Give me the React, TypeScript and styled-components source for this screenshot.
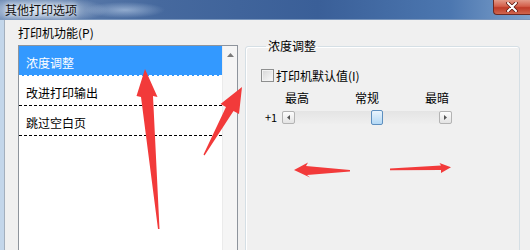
import styled, { createGlobalStyle } from "styled-components"

const GlobalStyle = createGlobalStyle`
	* { box-sizing: border-box; }
	html, body {
		margin: 0;
		padding: 0;
		background: #f0f0f0;
		overflow: hidden;
	}
	body {
		font-family: "Noto Sans CJK SC", "Liberation Sans", sans-serif;
		font-size: 12px;
		color: #000;
	}
`

const Window = styled.div`
	position: relative;
	width: 530px;
	height: 250px;
	display: flex;
	flex-direction: column;
	overflow: hidden;
`

const TitleBar = styled.header`
	height: 20px;
	flex-shrink: 0;
	display: flex;
	align-items: flex-start;
	justify-content: space-between;
	border-bottom: 1px solid #7b97bd;
	background:
		radial-gradient(ellipse 70px 14px at 38px 10px, rgba(220, 232, 245, 0.85), rgba(220, 232, 245, 0) 100%),
		radial-gradient(ellipse 40px 8px at 125px 10px, rgba(190, 210, 235, 0.6), rgba(190, 210, 235, 0) 100%),
		linear-gradient(to right, #6886b2 0%, #46699e 30%, #3a5f98 60%, #4c77b0 85%, #7fa2cc 100%);
`

const Title = styled.span`
	padding-left: 5px;
	line-height: 19px;
	font-size: 12px;
	color: #111;
	text-shadow: 0 0 4px #fff, 0 0 8px rgba(255, 255, 255, 0.9);
`

const CloseButton = styled.div`
	flex: 0 0 37px;
	height: 15px;
	display: flex;
	justify-content: center;
	align-items: center;
	border-left: 1px solid #6e2a22;
	border-bottom: 1px solid #6e2a22;
	border-radius: 0 0 0 4px;
	background: linear-gradient(to bottom, #e39a88 0%, #d35f4a 45%, #bf3b27 55%, #d0664f 100%);
`

const Frame = styled.div`
	flex: 1;
	display: flex;
	min-height: 0;
	border-left: 4px solid #c3d6ea;
`

const Body = styled.div`
	flex: 1;
	display: flex;
	align-items: flex-start;
	background: #f0f0f0;
	border-left: 1px solid #a3afbd;
`

const LeftPane = styled.div`
	display: flex;
	flex-direction: column;
	gap: 5px;
	padding: 6px 0 0 13px;
`

const SectionLabel = styled.div`
	line-height: 14px;
`

const ListBox = styled.div`
	width: 220px;
	height: 230px;
	display: flex;
	border: 1px solid #8e949c;
	background: #fff;
`

const Items = styled.div`
	flex: 1;
	display: flex;
	flex-direction: column;
`

const Item = styled.div<{ $selected?: boolean }>`
	height: 30px;
	display: flex;
	align-items: center;
	padding: 3px 0 0 7px;
	border-bottom: 1px dashed ${(p) => (p.$selected ? "#ffffff" : "#000000")};
	background: ${(p) => (p.$selected ? "#3399ff" : "transparent")};
	color: ${(p) => (p.$selected ? "#ffffff" : "#000000")};
`

const ScrollTrack = styled.div`
	width: 15px;
	display: flex;
	flex-direction: column;
	background: #f5f5f5;
	border-left: 1px solid #ebebeb;
`

const ScrollArrow = styled.div`
	height: 17px;
	display: flex;
	justify-content: center;
	align-items: center;
`

const GroupBox = styled.fieldset`
	margin: 20px 0 0 7px;
	width: 275px;
	height: 240px;
	min-width: 0;
	padding: 16px 0 0 15px;
	border: 1px solid #d5dfe5;
	border-radius: 3px;
	box-shadow: inset 1px 1px 0 #ffffff;
`

const Legend = styled.legend`
	margin-left: 5px;
	padding: 0 2px;
	line-height: 12px;
	font-size: 12px;
`

const CheckRow = styled.label`
	display: flex;
	align-items: center;
	gap: 2px;
	height: 14px;
`

const CheckBox = styled.span`
	width: 13px;
	height: 13px;
	border: 1px solid #8e8f8f;
	background: linear-gradient(135deg, #d6d6d6, #fbfbfb);
	box-shadow: inset 0 0 0 1px #f2f2f2;
`

const Scale = styled.div`
	margin-top: 9px;
	display: flex;
	flex-direction: column;
	gap: 5px;
`

const ScaleLabels = styled.div`
	width: 164px;
	margin-left: 24px;
	display: flex;
	justify-content: space-between;
	line-height: 14px;
`

const SliderRow = styled.div`
	display: flex;
	align-items: center;
	height: 15px;
`

const ValueText = styled.span`
	width: 21px;
	padding-left: 4px;
	font-size: 11px;
	line-height: 15px;
`

const Track = styled.div`
	width: 170px;
	height: 13px;
	display: flex;
	align-items: center;
	background: linear-gradient(to bottom, #e4e4e4, #efefef);
`

const StepButton = styled.div`
	width: 13px;
	height: 13px;
	display: flex;
	justify-content: center;
	align-items: center;
	border: 1px solid #b3b3b3;
	border-radius: 2px;
	background: linear-gradient(to bottom, #fdfdfd, #e3e3e3);
`

const Rail = styled.div`
	flex: 1;
	height: 100%;
	display: flex;
	align-items: center;
`

const Thumb = styled.div<{ $offset: number }>`
	width: 12px;
	height: 15px;
	margin-left: ${(p) => p.$offset}px;
	border: 1px solid #5d8fbf;
	border-radius: 2px;
	background: linear-gradient(to bottom, #e9f4fd, #b3d8f5);
`

const Annotations = styled.svg`
	position: absolute;
	top: 0;
	left: 0;
	pointer-events: none;
`

const arrows = [
	"145,69 157.5,97 153,96 159.5,229 158,229 141,97 136.5,96",
	"242,87 239,114 233.5,111 204.5,155.5 203.5,154.5 226,107 220.5,104",
	"294,170 308,162.5 306,166 350,170 350,171.5 307,175 310,177.5",
	"390,168.5 441,165.5 439.5,163 451,167.3 441,173 441,170 390,170.3",
]

export default function App() {
	return (
		<Window>
			<GlobalStyle />
			<TitleBar>
				<Title>其他打印选项</Title>
				<CloseButton>
					<svg width="12" height="10" viewBox="0 0 12 10">
						<path d="M2 1 L10 9 M10 1 L2 9" stroke="#5a1a12" strokeWidth="3.6" strokeLinecap="round" />
						<path d="M2 1 L10 9 M10 1 L2 9" stroke="#ffffff" strokeWidth="2" strokeLinecap="round" />
					</svg>
				</CloseButton>
			</TitleBar>
			<Frame>
				<Body>
					<LeftPane>
						<SectionLabel>打印机功能(P)</SectionLabel>
						<ListBox>
							<Items>
								<Item $selected>浓度调整</Item>
								<Item>改进打印输出</Item>
								<Item>跳过空白页</Item>
							</Items>
							<ScrollTrack>
								<ScrollArrow>
									<svg width="7" height="4" viewBox="0 0 7 4">
										<path d="M0 4 L3.5 0 L7 4 Z" fill="#7a7a7a" />
									</svg>
								</ScrollArrow>
							</ScrollTrack>
						</ListBox>
					</LeftPane>
					<GroupBox>
						<Legend>浓度调整</Legend>
						<CheckRow>
							<CheckBox />
							打印机默认值(I)
						</CheckRow>
						<Scale>
							<ScaleLabels>
								<span>最高</span>
								<span>常规</span>
								<span>最暗</span>
							</ScaleLabels>
							<SliderRow>
								<ValueText>+1</ValueText>
								<Track>
									<StepButton>
										<svg width="3" height="5" viewBox="0 0 3 5">
											<path d="M3 0 L0 2.5 L3 5 Z" fill="#555" />
										</svg>
									</StepButton>
									<Rail>
										<Thumb $offset={76} />
									</Rail>
									<StepButton>
										<svg width="3" height="5" viewBox="0 0 3 5">
											<path d="M0 0 L3 2.5 L0 5 Z" fill="#555" />
										</svg>
									</StepButton>
								</Track>
							</SliderRow>
						</Scale>
					</GroupBox>
				</Body>
			</Frame>
			<Annotations width="530" height="250" viewBox="0 0 530 250">
				{arrows.map((pts) => (
					<polygon key={pts} points={pts} fill="#f23a3a" />
				))}
			</Annotations>
		</Window>
	)
}
